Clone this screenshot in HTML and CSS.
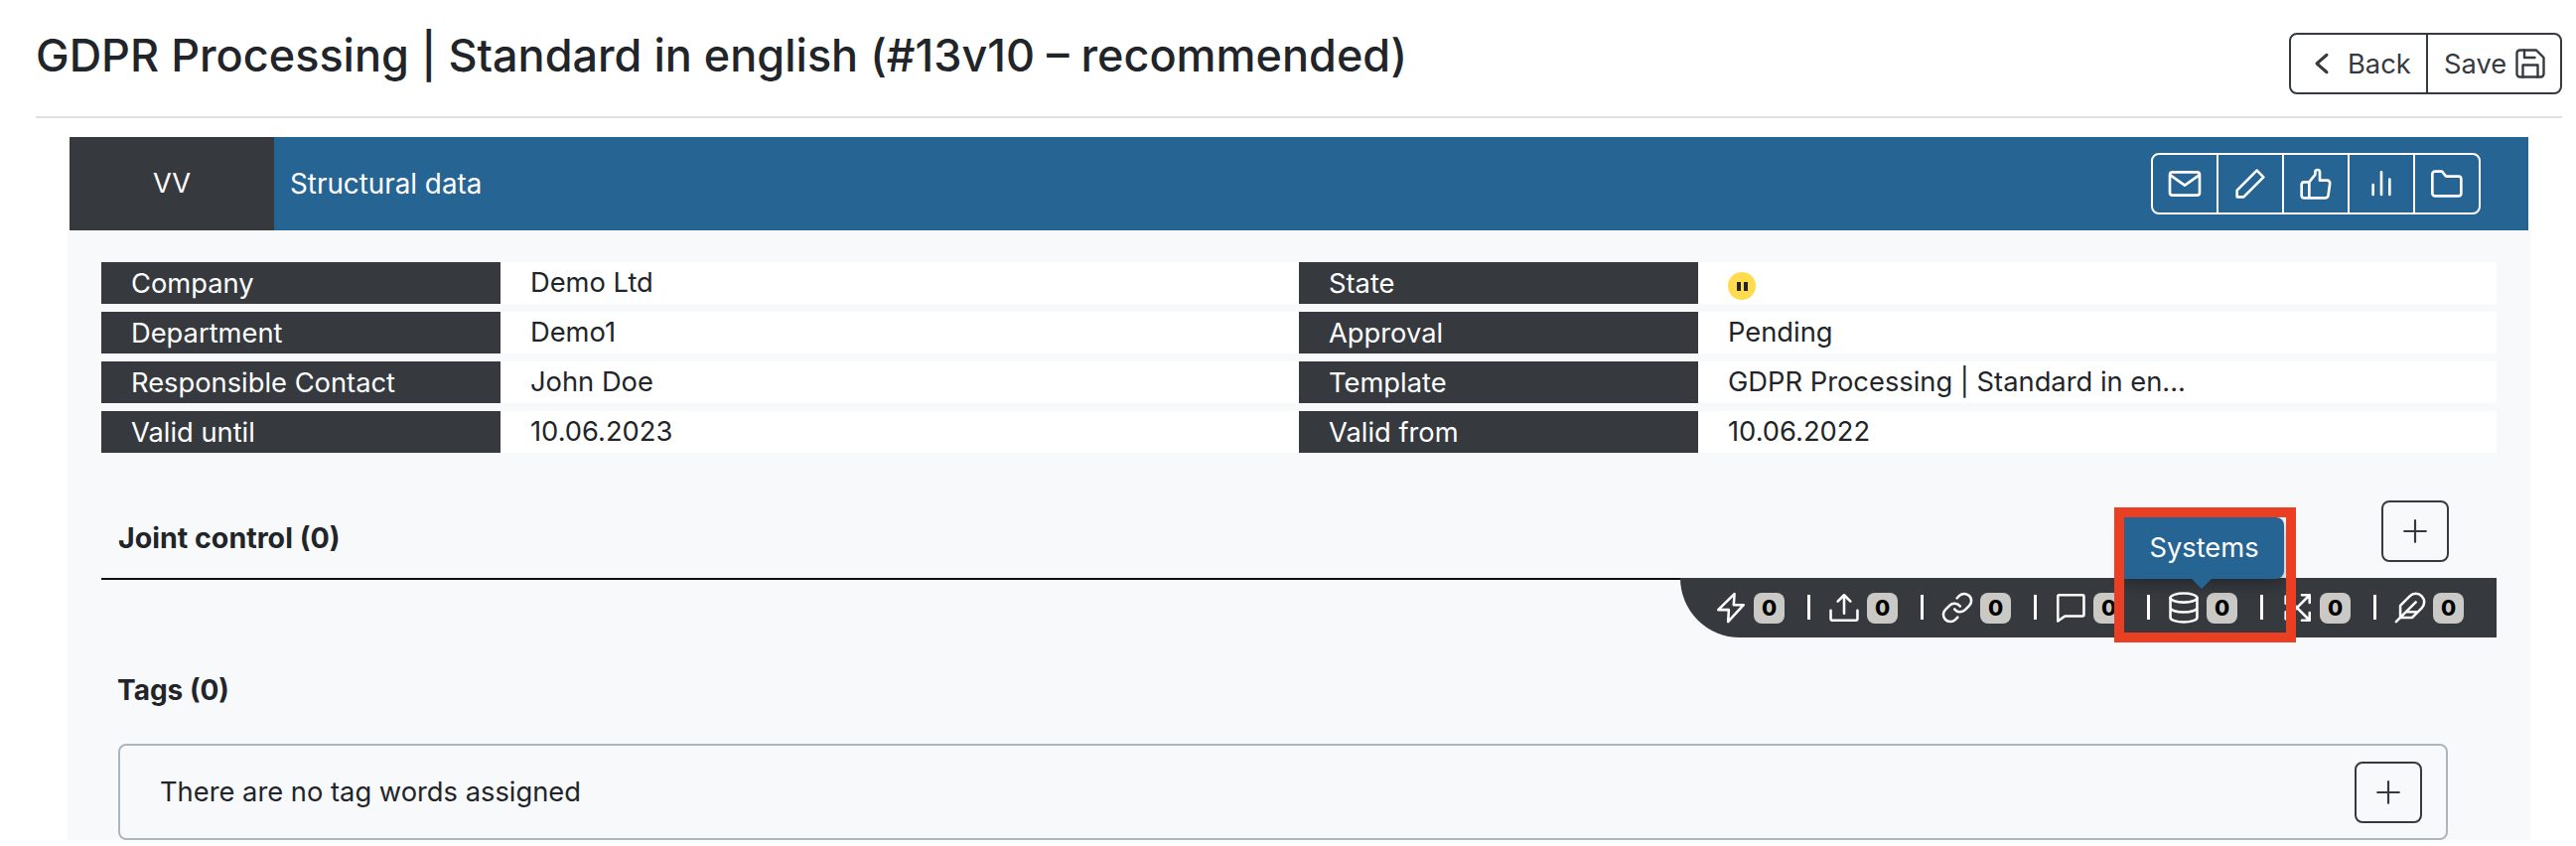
FILE: index.html
```html
<!DOCTYPE html>
<html lang="en">
<head>
  <meta charset="UTF-8" />
  <title>GDPR Processing</title>
  <link rel="stylesheet" href="styles.css">
</head>
<body>
  <svg class="sprites" width="0" height="0">
    <symbol id="i-mail" viewBox="0 0 24 24"><rect x="3" y="5" width="18" height="14" rx="1.6"/><path d="M3.5 7l8.500 6 8.500-6"/></symbol>
    <symbol id="i-pencil" viewBox="0 0 24 24"><path d="M4 20v-4L16 4l4 4L8 20z"/></symbol>
    <symbol id="i-thumb" viewBox="0 0 24 24"><path d="M8 20.600V11l3.600-4.500V5a1.400 1.400 0 0 1 2.800 0v5h4.400a1.700 1.700 0 0 1 1.700 2l-1 7a2 2 0 0 1-2 1.600H5a1.600 1.600 0 0 1-1.600-1.600v-6.400A1.600 1.600 0 0 1 5 11h3"/></symbol>
    <symbol id="i-bars" viewBox="0 0 24 24"><path d="M7 18.600v-6M12 18.600V5M17 18.600V9.400"/></symbol>
    <symbol id="i-folder" viewBox="0 0 24 24"><path d="M3.200 6.200A1.600 1.600 0 0 1 4.800 4.600H9l2.500 3H19a1.600 1.600 0 0 1 1.600 1.600v8.600a1.600 1.600 0 0 1-1.600 1.600H4.800a1.600 1.600 0 0 1-1.600-1.600z"/></symbol>
    <symbol id="i-chevron" viewBox="0 0 24 24"><path d="M16 5l-8 7 8 7"/></symbol>
    <symbol id="i-save" viewBox="0 0 24 24"><path d="M5 3h11l5 5v11a2 2 0 0 1-2 2H5a2 2 0 0 1-2-2V5a2 2 0 0 1 2-2z"/><path d="M7 21v-8h10v8M8 3v5h7"/></symbol>
    <symbol id="i-plus" viewBox="0 0 24 24"><path d="M12 2v20M2 12h20"/></symbol>
    <symbol id="i-bolt" viewBox="0 0 24 24"><path d="M14.500 2.200L3 13.500h7.500L10 22l11-12h-7z"/></symbol>
    <symbol id="i-upload" viewBox="0 0 24 24"><path d="M12 16V3M7.500 7.500L12 3l4.500 4.500M2.500 14v5.500a1.500 1.500 0 0 0 1.500 1.500h16a1.500 1.500 0 0 0 1.500-1.500V14"/></symbol>
    <symbol id="i-link" viewBox="0 0 24 24"><path d="M10 13a5 5 0 0 0 7.540.54l3-3a5 5 0 0 0-7.070-7.070l-1.720 1.710"/><path d="M14 11a5 5 0 0 0-7.540-.54l-3 3a5 5 0 0 0 7.070 7.070l1.710-1.710"/></symbol>
    <symbol id="i-chat" viewBox="0 0 24 24"><path d="M3 4a1 1 0 0 1 1-1h16.500a1 1 0 0 1 1 1v13a1 1 0 0 1-1 1H8l-5 3.500z"/></symbol>
    <symbol id="i-db" viewBox="0 0 24 24"><ellipse cx="12" cy="5" rx="9.500" ry="3.200"/><path d="M2.500 5v14c0 1.800 4.300 3.200 9.500 3.200s9.500-1.400 9.500-3.200V5M2.500 12c0 1.800 4.300 3.200 9.500 3.200s9.500-1.400 9.500-3.200"/></symbol>
    <symbol id="i-expand" viewBox="0 0 24 24"><path d="M4 20L21 3M15.500 3H21v5.500M4 4l17 17M15.500 21H21v-5.500M4 15v5h5M9 4H4v5"/></symbol>
    <symbol id="i-feather" viewBox="0 0 24 24"><path d="M20.240 12.240a6 6 0 0 0-8.490-8.490L5 10.500V19h8.500zM16 8L2 22M17.500 15H9"/></symbol>
  </svg>

  <div class="page">
    <header class="page-head">
      <h1>GDPR Processing | Standard in english (#13v10 – recommended)</h1>
      <div class="btn-group">
        <a class="btn btn-back"><svg class="icon icon-chevron"><use href="#i-chevron"/></svg>Back</a>
        <a class="btn btn-save">Save<svg class="icon icon-save"><use href="#i-save"/></svg></a>
      </div>
    </header>

    <section class="record">
      <div class="record-bar">
        <div class="record-type">VV</div>
        <div class="record-title">Structural data</div>
        <div class="bar-tools">
          <a><svg class="icon"><use href="#i-mail"/></svg></a>
          <a><svg class="icon"><use href="#i-pencil"/></svg></a>
          <a><svg class="icon"><use href="#i-thumb"/></svg></a>
          <a><svg class="icon"><use href="#i-bars"/></svg></a>
          <a><svg class="icon"><use href="#i-folder"/></svg></a>
        </div>
      </div>

      <div class="record-body">
        <div class="facts">
          <div class="fact"><span class="fact-label">Company</span><span class="fact-value">Demo Ltd</span></div>
          <div class="fact"><span class="fact-label">State</span><span class="fact-value"><span class="state-dot"><i></i><i></i></span></span></div>
          <div class="fact"><span class="fact-label">Department</span><span class="fact-value">Demo1</span></div>
          <div class="fact"><span class="fact-label">Approval</span><span class="fact-value">Pending</span></div>
          <div class="fact"><span class="fact-label">Responsible Contact</span><span class="fact-value">John Doe</span></div>
          <div class="fact"><span class="fact-label">Template</span><span class="fact-value">GDPR Processing | Standard in en...</span></div>
          <div class="fact"><span class="fact-label">Valid until</span><span class="fact-value">10.06.2023</span></div>
          <div class="fact"><span class="fact-label">Valid from</span><span class="fact-value">10.06.2022</span></div>
        </div>

        <div class="joint-head">
          <h2>Joint control (0)</h2>
          <a class="btn-add"><svg class="icon"><use href="#i-plus"/></svg></a>
        </div>

        <div class="counters">
          <div class="counter"><svg class="icon"><use href="#i-bolt"/></svg><b>0</b></div>
          <div class="counter"><svg class="icon"><use href="#i-upload"/></svg><b>0</b></div>
          <div class="counter"><svg class="icon"><use href="#i-link"/></svg><b>0</b></div>
          <div class="counter"><svg class="icon"><use href="#i-chat"/></svg><b>0</b></div>
          <div class="counter counter-active">
            <svg class="icon"><use href="#i-db"/></svg><b>0</b>
            <div class="tooltip">Systems</div>
            <div class="highlight"></div>
          </div>
          <div class="counter"><svg class="icon"><use href="#i-expand"/></svg><b>0</b></div>
          <div class="counter"><svg class="icon"><use href="#i-feather"/></svg><b>0</b></div>
        </div>

        <h2 class="tags-title">Tags (0)</h2>
        <div class="tags-box">
          <span>There are no tag words assigned</span>
          <a class="btn-add"><svg class="icon"><use href="#i-plus"/></svg></a>
        </div>
      </div>
    </section>
  </div>
</body>
</html>
```

FILE: styles.css
```css
:root {
  --dark: #363a3f;
  --blue: #266494;
  --panel: #f8f9fa;
  --text: #212529;
}

body {
  margin: 0;
  font-family: Inter, 'Liberation Sans', sans-serif;
  font-size: 27.3px;
  color: var(--text);
  background: #fff;
  overflow: hidden;
}

.sprites {
  position: absolute;
}

.icon {
  fill: none;
  stroke: currentColor;
  stroke-width: 2;
  stroke-linecap: round;
  stroke-linejoin: round;
  display: block;
  flex: none;
}

.page {
  padding: 0 14px 0 36px;
}

.page-head {
  display: flex;
  justify-content: space-between;
  align-items: flex-start;
  height: 119px;
  border-bottom: 2px solid #dee2e6;
  box-sizing: border-box;
}

h1 {
  margin: 0;
  padding-top: 26px;
  font-size: 45px;
  font-weight: 500;
  line-height: 60px;
  white-space: nowrap;
}

.btn-group {
  display: flex;
  margin-top: 33px;
  height: 62px;
  border: 2px solid var(--dark);
  border-radius: 8px;
  box-sizing: border-box;
  color: var(--dark);
}

.btn {
  display: flex;
  align-items: center;
  box-sizing: border-box;
}

.btn-back {
  width: 138px;
  padding-left: 16px;
  border-right: 2px solid var(--dark);
}

.btn-save {
  width: 133px;
  padding-left: 16px;
}

.icon-chevron {
  width: 30px;
  height: 30px;
  margin-right: 11px;
  stroke-width: 2.4;
}

.icon-save {
  width: 36px;
  height: 36px;
  margin-left: 6px;
  stroke-width: 1.6;
}

.record {
  margin: 19px 32px 0 32px;
}

.record-bar {
  display: flex;
  align-items: center;
  height: 94px;
  margin: 0 2px;
  background: var(--blue);
  color: #fff;
}

.record-type {
  width: 206px;
  height: 100%;
  line-height: 94px;
  text-align: center;
  background: var(--dark);
}

.record-title {
  flex: 1;
  padding-left: 16px;
  font-size: 27.8px;
}

.bar-tools {
  display: flex;
  margin-right: 48px;
  border: 2px solid #fff;
  border-radius: 8px;
}

.bar-tools a {
  width: 64px;
  height: 58px;
  display: flex;
  align-items: center;
  justify-content: center;
  border-left: 2px solid #fff;
}

.bar-tools a:first-child {
  border-left: 0;
}

.bar-tools .icon {
  width: 40px;
  height: 40px;
  stroke-width: 1.6;
}

.record-body {
  height: 614px;
  box-sizing: border-box;
  background: var(--panel);
  padding: 32px 34px 0;
}

.facts {
  display: grid;
  grid-template-columns: 1206px 1206px;
  row-gap: 8px;
}

.fact {
  display: flex;
  height: 42px;
  line-height: 44px;
  background: #fff;
}

.fact-label {
  width: 402px;
  box-sizing: border-box;
  padding-left: 30px;
  background: var(--dark);
  color: #fff;
}

.fact-value {
  padding-left: 30px;
  display: flex;
  align-items: center;
}

.state-dot {
  width: 28px;
  height: 28px;
  margin-top: 6px;
  border-radius: 50%;
  background: #ffdb4d;
  display: flex;
  align-items: center;
  justify-content: center;
  gap: 3px;
}

.state-dot i {
  width: 4px;
  height: 9px;
  background: var(--text);
}

h2 {
  margin: 0;
  font-size: 28px;
  font-weight: 700;
}

.joint-head {
  display: flex;
  justify-content: space-between;
  align-items: flex-start;
  height: 80px;
  margin-top: 48px;
  padding: 0 48px 0 17px;
  box-sizing: border-box;
  border-bottom: 2px solid #111;
}

.joint-head h2 {
  margin-top: 20px;
  font-size: 28.6px;
}

.btn-add {
  width: 68px;
  height: 62px;
  box-sizing: border-box;
  border: 2px solid var(--dark);
  border-radius: 8px;
  display: flex;
  align-items: center;
  justify-content: center;
  color: var(--dark);
}

.btn-add .icon {
  width: 26px;
  height: 26px;
}

.counters {
  display: flex;
  margin-left: auto;
  width: 822px;
  height: 60px;
  margin-top: -2px;
  padding-left: 34px;
  box-sizing: border-box;
  align-items: center;
  background: var(--dark);
  border-bottom-left-radius: 60px;
  color: #fff;
  position: relative;
}

.counter {
  display: flex;
  align-items: center;
  flex: none;
  width: 114px;
  height: 31px;
  position: relative;
}

.counter:last-child {
  width: 71px;
}

.counter .icon {
  width: 34px;
  height: 34px;
  stroke-width: 1.8;
}

.counter b {
  margin-left: 6px;
  width: 31px;
  height: 31px;
  line-height: 31px;
  text-align: center;
  border-radius: 8px;
  background: #cbc9c6;
  color: #000;
  font-size: 22px;
  font-weight: 800;
}

.counter:not(:last-child)::after {
  content: "";
  position: absolute;
  left: 94px;
  top: 2px;
  width: 3px;
  height: 25px;
  background: #fff;
}

.tooltip {
  position: absolute;
  left: -43px;
  top: -76px;
  width: 161px;
  height: 62px;
  line-height: 62px;
  text-align: center;
  color: #fff;
  background: var(--blue);
  border-radius: 0 8px 8px 0;
  box-shadow: 0 6px 14px rgba(0, 0, 0, 0.3);
  z-index: 2;
}

.tooltip::after {
  content: "";
  position: absolute;
  left: 68px;
  bottom: -10px;
  border: 10px solid transparent;
  border-bottom: 0;
  border-top-color: var(--blue);
}

.highlight {
  position: absolute;
  left: -53px;
  top: -86px;
  width: 183px;
  height: 136px;
  box-sizing: border-box;
  border: 10px solid #ea3f22;
  z-index: 3;
}

.tags-title {
  margin: 32px 0 0 16px;
  line-height: 42px;
}

.tags-box {
  display: flex;
  justify-content: space-between;
  align-items: center;
  height: 97px;
  margin: 33px 49px 0 17px;
  padding: 0 24px 0 40px;
  box-sizing: border-box;
  border: 2px solid #adb5bd;
  border-radius: 8px;
}
```
